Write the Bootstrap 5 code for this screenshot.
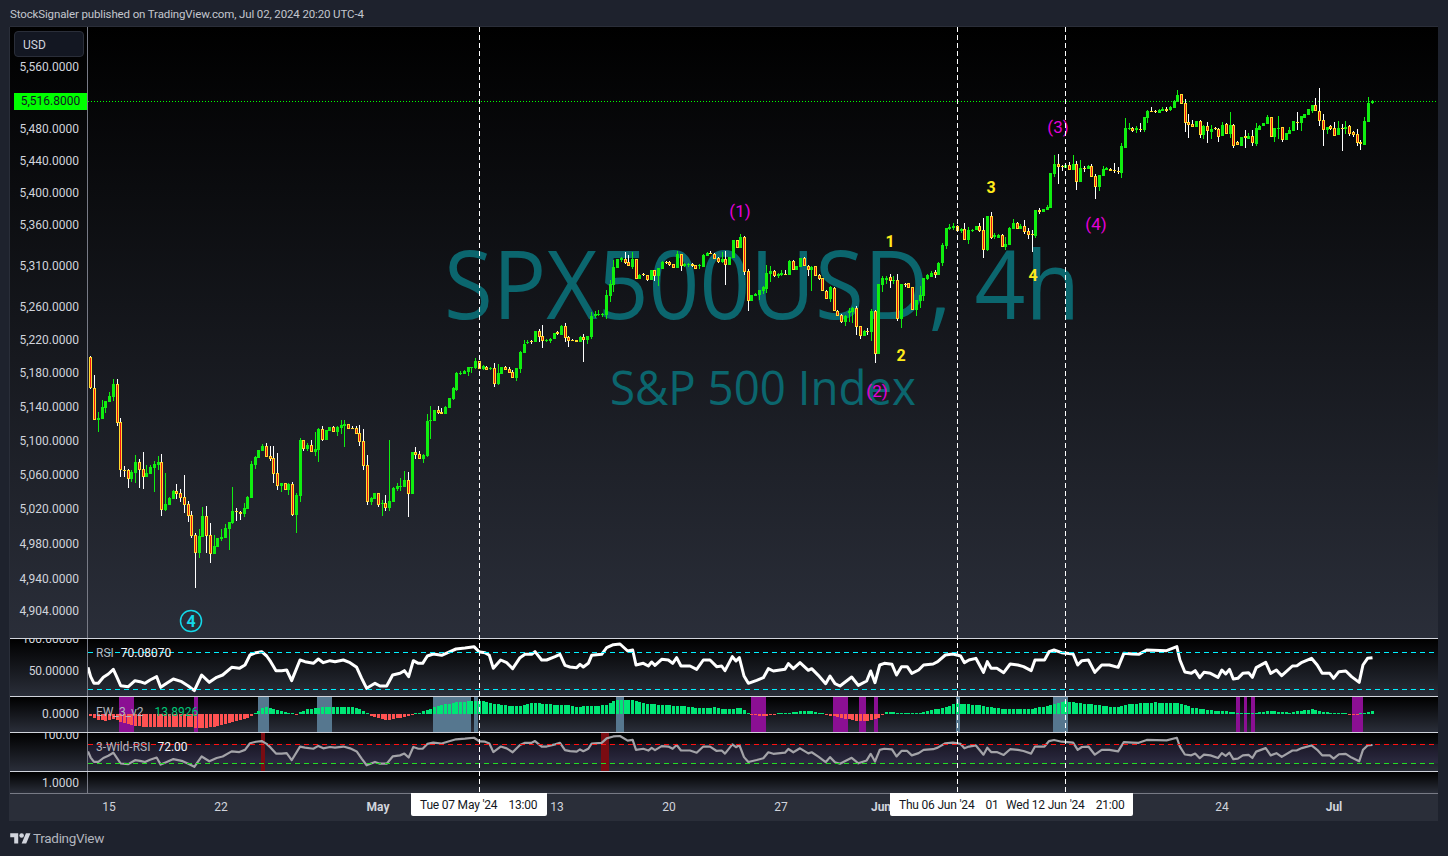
<!DOCTYPE html>
<html lang="en">
<head>
    <meta charset="UTF-8">
    <meta name="viewport" content="width=device-width, initial-scale=1.0">
    <title>SPX500USD, 4h</title>
    <link rel="stylesheet" href="https://cdn.jsdelivr.net/npm/bootstrap@5.3.0/dist/css/bootstrap.min.css">
    <style>
        body {
            background-color: #1e222d;
            color: #b2b5be;
            font-family: Roboto, "Liberation Sans", sans-serif;
            overflow: hidden;
        }
        .title-bar {
            height: 27px;
            padding-left: 10px;
            font-size: 11.5px;
            letter-spacing: -0.13px;
            line-height: 28px;
            color: #c3c6ce;
        }
        .chart {
            width: 1428px;
            margin-left: 10px;
            box-shadow: 0 -1px 0 #2a2e39, -1px 0 0 #2a2e39;
        }
        .pane {
            background: linear-gradient(#000, #2a2e39);
            border-bottom: 1px solid #d1d4dc;
        }
        .pane-main { height: 612px; }
        .pane-rsi { height: 58px; }
        .pane-ew { height: 36px; }
        .pane-wild { height: 39px; }
        .pane-blank { height: 22px; border-bottom-color: #787b86; }
        .axis {
            width: 78px;
            flex: none;
            overflow: hidden;
            border-right: 1px solid #787b86;
        }
        .axis-label {
            right: 8px;
            font-size: 12px;
            line-height: 16px;
            color: #d1d4dc;
        }
        .plot {
            overflow: hidden;
            min-width: 0;
        }
        .plot svg, .crosshairs {
            display: block;
            width: 100%;
            height: 100%;
        }
        .currency-btn {
            top: 4px;
            left: 4px;
            width: 70px;
            height: 26px;
            padding: 0 0 0 8px;
            font-size: 12px;
            line-height: 26px;
            text-align: left;
            color: #d1d4dc;
            background-color: #131722;
            border: 1px solid #2a2e39;
            border-radius: 4px;
        }
        .price-tag {
            top: 66px;
            left: 4px;
            width: 73px;
            height: 17px;
            font-size: 12px;
            line-height: 17px;
            text-align: center;
            color: #131722;
            background-color: #00ff00;
        }
        .legend {
            left: 8px;
            font-size: 12px;
            line-height: 14px;
            color: #b2b5be;
            white-space: nowrap;
        }
        .legend-value { color: #f0f3fa; }
        .legend-green { color: #00c777; }
        .time-axis {
            height: 27px;
            background-color: #2a2e39;
            overflow: visible;
        }
        .time-label {
            top: 5px;
            font-size: 12px;
            line-height: 16px;
            color: #d1d4dc;
            transform: translateX(-50%);
        }
        .time-tip {
            top: -1px;
            width: 136px;
            height: 23px;
            padding-left: 9px;
            font-size: 12px;
            letter-spacing: -0.2px;
            line-height: 24px;
            color: #131722;
            background-color: #fff;
            border-radius: 0 0 2px 2px;
            white-space: nowrap;
            overflow: hidden;
        }
        .time-tip span { margin-left: 11px; }
        .watermark {
            fill: #0b666e;
            font-family: "Open Sans", sans-serif;
            text-anchor: middle;
        }
        .wave-primary {
            fill: #e600dc;
            font-size: 17px;
            text-anchor: middle;
        }
        .wave-minor {
            fill: #ffeb1a;
            font-size: 16px;
            font-weight: 700;
            text-anchor: middle;
        }
        .crosshairs {
            top: 0;
            left: 0;
            pointer-events: none;
        }
        .footer-bar {
            padding-left: 10px;
            height: 35px;
            font-size: 13.5px;
            letter-spacing: -0.3px;
            color: #b2b5be;
        }
        .footer-bar span { margin-left: 2px; }
    </style>
</head>
<body>

    <div class="title-bar">StockSignaler published on TradingView.com, Jul 02, 2024 20:20 UTC-4</div>

    <div class="chart position-relative">
        <div class="pane pane-main d-flex">
            <div class="axis position-relative" id="axisMain">
                <button class="btn currency-btn position-absolute">USD</button>
                <div class="price-tag position-absolute">5,516.8000</div>
            </div>
            <div class="plot flex-grow-1"><svg id="plotMain" viewBox="88 27 1350 611" shape-rendering="crispEdges"></svg></div>
        </div>
        <div class="pane pane-rsi d-flex">
            <div class="axis position-relative" id="axisRsi"></div>
            <div class="plot flex-grow-1 position-relative">
                <svg id="plotRsi" viewBox="88 639 1350 57"></svg>
                <div class="legend position-absolute" style="top: 7px">RSI <span class="legend-value ms-1">70.08070</span></div>
            </div>
        </div>
        <div class="pane pane-ew d-flex">
            <div class="axis position-relative" id="axisEw"></div>
            <div class="plot flex-grow-1 position-relative">
                <svg id="plotEw" viewBox="88 697 1350 35" shape-rendering="crispEdges"></svg>
                <div class="legend position-absolute" style="top: 8px">EW_3_v2 <span class="legend-green ms-2">13.8926</span></div>
            </div>
        </div>
        <div class="pane pane-wild d-flex">
            <div class="axis position-relative" id="axisWild"></div>
            <div class="plot flex-grow-1 position-relative">
                <svg id="plotWild" viewBox="88 733 1350 38"></svg>
                <div class="legend position-absolute" style="top: 7px">3-Wild-RSI <span class="legend-value ms-1">72.00</span></div>
            </div>
        </div>
        <div class="pane pane-blank d-flex">
            <div class="axis position-relative" id="axisBlank"></div>
            <div class="plot flex-grow-1"></div>
        </div>
        <div class="time-axis position-relative" id="timeAxis"></div>
        <svg class="crosshairs position-absolute" id="crosshairs" viewBox="10 27 1428 794"></svg>
    </div>

    <div class="footer-bar d-flex align-items-center">
        <svg width="21" height="16" viewBox="0 0 36 28" fill="#d1d4dc"><path d="M14 22H7V11H0V4h14v18zM28 22h-8l7.5-18h8L28 22z"/><circle cx="20" cy="8" r="4"/></svg>
        <span>TradingView</span>
    </div>

    <script>
        // [high, body top, body bottom, low, 1 = up bar], read off the picture at 3x
        // each segment has its own y offset
        const barsA = [[47,52,145,147,0],[105,145,240,240,0],[217,234,240,276,1],[180,202,237,237,1],[183,183,205,218,1],[156,168,186,186,1],[117,132,171,183,1],[117,132,249,258,0],[235,246,391,411,0],[379,390,393,411,0],[388,391,417,444,0],[391,397,417,426,1],[345,366,399,430,1],[358,366,390,444,0],[336,387,411,447,0],[375,399,411,411,1],[376,381,402,402,1],[364,372,384,456,1],[348,366,375,390,1],[342,366,510,528,0],[399,492,510,513,1],[471,474,495,495,1],[450,453,477,477,1],[432,453,462,477,0],[447,459,474,486,0],[405,471,495,519,0],[483,492,528,546,0],[513,525,588,594,0],[579,585,639,744,0],[567,588,639,654,1],[501,528,591,591,1],[498,528,588,639,0],[549,585,642,669,0],[585,618,642,642,1],[594,594,621,621,1],[567,591,597,603,1],[552,564,594,594,1],[546,546,567,630,1],[441,513,549,552,1],[504,513,515,543,0],[513,516,521,540,0],[489,504,522,531,1],[468,471,507,507,1],[363,372,474,474,1],[348,351,375,387,1],[330,330,354,354,1],[312,318,333,333,1],[309,318,351,351,0],[318,348,357,363,0],[318,354,402,429,0],[339,399,438,450,0],[429,429,438,456,1],[429,430,450,450,0],[429,432,450,465,1],[426,432,525,528,0],[459,465,525,579,1],[294,300,468,486,1],[300,300,327,333,0],[309,315,327,333,1],[300,315,336,336,0],[276,327,336,348,1],[264,267,330,366,1],[258,267,300,303,0],[270,270,300,300,1],[261,261,273,273,1],[258,261,276,276,0],[258,261,276,288,1],[240,255,264,282,1],[240,252,258,321,1],[252,252,267,267,0],[258,264,266,267,0],[258,264,282,282,0],[255,279,306,318,0],[267,303,378,390,0],[345,375,486,495,0],[472,474,486,495,1],[459,459,477,477,1],[459,459,495,501,0],[480,489,492,528,1],[465,489,504,513,0],[300,483,504,513,1],[441,444,486,486,1],[429,438,447,453,1],[414,438,441,453,1],[393,420,441,441,1],[396,420,462,531,0],[336,336,462,462,1],[321,336,345,357,0],[333,342,357,357,0],[342,345,357,369,1],[222,243,348,351,1],[198,240,243,297,1],[210,210,243,243,1],[198,210,219,222,0],[204,216,222,222,0],[198,201,222,222,1],[174,174,204,204,1],[141,144,177,180,1],[96,99,150,153,1],[93,99,102,105,1],[90,93,102,102,1],[81,81,96,108,1],[81,81,84,99,1],[54,63,84,87,1],[63,63,87,87,0]];
        const barsB = [[525,528,537,540,1],[527,530,539,540,0],[530,534,537,540,1],[520,534,582,591,0],[522,549,582,585,1],[531,531,552,552,1],[528,532,540,540,0],[531,537,549,549,0],[540,545,564,564,0],[534,534,564,573,1],[483,486,537,549,1],[450,462,489,489,1],[450,456,459,462,1],[450,453,456,462,0],[423,423,456,456,1],[417,423,441,456,0],[405,438,453,474,0],[447,450,453,456,1],[444,447,453,459,1],[429,429,447,447,1],[423,426,432,435,0],[405,408,435,435,1],[399,408,444,456,0],[438,441,453,471,0],[447,450,453,453,0],[450,450,456,456,0],[439,441,456,456,1],[432,441,450,516,0],[438,438,450,462,1],[366,378,441,447,1],[363,372,378,384,1],[360,372,375,378,1],[369,372,375,382,1],[300,315,375,387,1],[270,282,318,336,1],[210,231,285,306,1],[207,207,234,234,1],[201,205,210,216,1],[186,207,219,222,0],[195,216,228,228,0],[186,207,231,237,1],[207,207,267,267,0],[252,255,267,267,1],[249,252,255,258,0],[255,255,270,273,0],[240,240,270,270,1],[240,240,258,273,0],[234,234,258,288,1],[213,216,237,237,1],[213,216,218,222,0],[213,216,225,228,0],[222,222,234,234,0],[183,192,234,234,1],[192,192,228,243,0],[219,222,228,231,1],[219,222,225,231,1],[219,222,228,231,0],[225,225,237,237,0],[222,225,228,237,1],[192,195,231,231,1],[186,189,198,198,1],[183,188,190,192,0],[189,192,207,207,0],[201,204,216,219,0],[186,207,216,219,1],[183,207,225,285,0],[201,201,225,225,1],[150,150,204,204,1],[150,150,174,174,0],[132,141,174,174,1],[138,141,246,255,0],[237,243,333,363,0],[315,315,333,333,1],[309,312,318,318,1],[300,300,315,330,1],[288,291,303,312,1],[225,249,297,309,1],[228,243,252,276,1],[240,243,258,261,0],[249,252,258,264,1],[240,249,255,258,1],[240,252,252,255,0],[210,213,255,255,1],[210,213,240,240,0],[228,228,240,240,1],[204,204,231,231,1],[201,204,228,228,0],[225,228,240,258,0],[228,231,240,303,1],[228,228,258,258,0],[252,255,267,270,0],[264,264,303,303,0],[300,303,327,327,0],[288,291,327,336,1],[291,294,363,363,0],[360,363,378,378,0],[372,375,396,399,0],[375,378,396,408,1],[354,363,369,396,1],[351,354,366,399,1],[348,354,411,435,0],[408,408,438,447,0],[420,423,438,438,1],[414,423,426,435,0],[357,363,426,453,1],[360,363,492,519,0],[282,282,492,492,1],[258,264,285,306,1],[258,264,270,282,1],[252,261,273,294,0],[258,270,273,282,1],[252,270,387,393,0],[282,282,387,414,1],[279,282,285,291,0],[279,279,294,294,0],[291,291,360,360,0],[330,330,360,378,1],[288,315,333,354,1],[264,264,318,333,1],[252,255,267,270,1],[243,249,261,261,1],[240,246,255,264,0],[216,219,255,255,1],[159,165,219,228,1],[114,114,168,177,1]];
        const barsC = [[432,441,447,450,1],[430,438,444,450,1],[435,438,453,453,0],[444,447,453,459,1],[429,447,480,480,0],[441,450,480,492,1],[447,450,453,456,1],[438,438,450,450,1],[429,438,453,456,0],[414,450,510,534,0],[408,408,510,513,1],[396,408,474,477,0],[459,465,471,477,1],[462,465,474,474,1],[462,465,501,501,0],[471,492,501,510,1],[441,444,495,495,1],[417,429,447,447,1],[426,429,447,447,0],[432,438,447,447,1],[420,438,456,462,0],[444,453,465,477,0],[450,462,465,516,0],[390,390,468,474,1],[384,390,396,402,0],[387,387,396,396,1],[375,381,390,390,1],[279,279,384,384,1],[225,252,282,291,1],[222,252,261,312,0],[255,258,261,273,0],[252,255,264,264,1],[246,255,270,270,0],[225,252,270,270,1],[243,252,306,330,0],[240,264,306,306,1],[258,264,267,276,0],[255,258,267,267,1],[252,258,291,291,0],[282,288,321,357,0],[285,285,321,333,1],[258,267,288,288,1],[261,264,270,270,1],[264,267,273,273,0],[249,270,272,279,0],[261,272,274,282,0],[189,198,279,294,1],[114,144,204,204,1],[129,144,147,150,1],[141,144,153,156,0],[138,144,150,159,1],[129,147,150,156,0],[111,111,150,156,1],[90,93,114,129,1],[81,93,96,96,0],[90,93,97,99,0],[87,90,99,99,1],[81,87,93,93,1],[81,87,93,96,0],[78,81,90,93,1],[60,63,84,84,1],[30,45,66,66,1],[42,42,72,72,0],[57,69,129,156,0],[102,126,135,174,0],[120,132,141,141,0],[123,123,141,141,1],[120,123,165,174,0],[135,138,165,177,1],[126,138,153,189,0],[135,147,156,177,1],[141,144,147,150,0],[144,147,171,186,0],[126,135,168,168,1],[129,132,162,162,0],[96,135,162,174,1],[132,135,198,204,0],[183,186,195,195,0],[171,171,198,198,1],[150,168,174,204,0],[159,168,177,177,1],[150,168,189,198,0],[129,144,192,198,1],[135,138,150,150,1],[129,129,138,138,1],[105,111,132,132,1],[111,111,171,171,0],[144,144,171,186,1],[108,144,147,177,1],[141,141,180,186,0],[159,159,180,180,1],[141,150,162,162,1],[123,123,153,153,1],[96,126,129,150,0],[108,108,129,153,1],[102,102,114,114,1],[87,87,105,105,1],[75,75,93,99,1],[54,75,93,93,0],[24,93,123,138,0],[102,120,150,198,0],[141,141,150,162,1],[135,138,147,150,0],[126,144,168,168,0],[123,144,165,165,1],[132,144,146,213,0],[123,141,147,162,1],[135,138,162,168,0],[153,156,165,171,0],[147,162,189,198,0],[180,186,192,210,0],[111,123,195,195,1],[51,69,126,126,1],[60,63,69,72,1]];

        const rsiA = [[264,112],[272,140],[282,160],[295,160],[310,142],[325,132],[340,118],[350,140],[362,167],[385,170],[405,152],[420,155],[435,160],[450,150],[470,140],[482,172],[500,160],[520,147],[545,155],[565,168],[583,182],[605,135],[628,157],[650,142],[668,135],[695,112],[718,115],[735,105],[750,75],[768,68],[785,65],[800,78],[812,95],[828,122],[845,122],[860,120],[875,152],[900,90],[915,95],[940,100],[955,87],[970,98],[990,92],[1005,95],[1030,90],[1050,98],[1070,112],[1085,145],[1100,175],[1125,160],[1140,168],[1160,168],[1178,135],[1200,130],[1213,122],[1226,140],[1240,92],[1255,100],[1268,100],[1282,78],[1300,72],[1325,76],[1345,67],[1368,57],[1395,54],[1422,50],[1438,66]];
        const rsiB = [[0,48],[15,50],[28,58],[40,97],[62,72],[80,80],[98,98],[120,65],[135,55],[155,55],[165,47],[185,72],[200,72],[225,62],[240,55],[255,88],[270,93],[290,95],[300,85],[310,93],[325,82],[335,58],[365,55],[380,35],[400,26],[420,24],[443,45],[458,42],[468,87],[490,82],[505,90],[515,78],[525,88],[545,70],[565,72],[578,82],[590,65],[603,90],[630,90],[650,100],[670,72],[690,72],[710,92],[725,90],[735,104],[757,62],[768,75],[778,65],[792,120],[805,142],[830,133],[850,125],[865,98],[880,105],[915,100],[925,83],[940,98],[960,80],[985,103],[995,98],[1015,118],[1037,143],[1050,120],[1065,143],[1080,150],[1115,123],[1135,148],[1160,135],[1172,105],[1185,140]];
        const rsiC = [[78,105],[90,100],[110,103],[122,135],[135,110],[150,110],[162,130],[180,120],[193,105],[218,102],[230,95],[250,75],[270,72],[290,78],[300,98],[312,90],[330,85],[350,127],[360,95],[370,115],[385,115],[403,128],[420,102],[440,105],[455,110],[475,122],[485,90],[510,90],[522,65],[535,60],[555,68],[585,72],[597,105],[608,92],[625,90],[642,127],[660,105],[680,105],[703,112],[718,70],[740,72],[757,73],[778,60],[830,62],[857,50],[865,90],[878,126],[895,130],[905,122],[917,143],[928,127],[945,130],[965,142],[975,120],[985,132],[995,118],[1005,147],[1017,145],[1030,130],[1045,128],[1055,142],[1065,113],[1090,97],[1103,130],[1118,120],[1132,137],[1160,108],[1172,107],[1185,97],[1210,85],[1225,105],[1238,130],[1258,130],[1268,145],[1282,125],[1300,123],[1315,140],[1335,157],[1345,105],[1357,85],[1370,83]];

        const ewA = [[264,-3],[290,-18],[320,-20],[345,-15],[360,-25],[400,-35],[440,-40],[480,-40],[520,-38],[560,-38],[590,-42],[640,-40],[680,-30],[720,-18],[755,-6],[765,3],[785,18],[800,20],[830,12],[860,4],[885,-4],[900,6],[920,14],[960,20],[1060,22],[1090,8],[1105,-3],[1130,-12],[1160,-18],[1200,-12],[1230,-4],[1250,2],[1280,12],[1310,24],[1360,34],[1410,38]];
        const ewB = [[0,40],[30,32],[60,28],[100,24],[130,26],[160,34],[220,28],[260,27],[290,22],[340,24],[380,28],[400,40],[430,42],[460,42],[480,34],[530,28],[570,26],[620,22],[660,18],[700,20],[740,14],[780,18],[805,3],[815,-3],[850,-6],[880,-2],[910,2],[960,9],[1000,8],[1020,2],[1030,-3],[1060,-6],[1100,-15],[1130,-20],[1160,-22],[1195,-12]];
        const ewC = [[85,-3],[95,6],[125,4],[160,-2],[190,6],[240,18],[280,32],[340,26],[400,15],[470,14],[520,25],[560,38],[640,28],[700,20],[730,30],[800,35],[860,32],[900,18],[960,10],[1005,6],[1020,-1],[1060,3],[1100,10],[1150,4],[1210,14],[1260,3],[1270,-1],[1330,-2],[1350,3],[1370,10]];

        const purpleBands = [[119,134],[194,198],[751,766],[833,848],[859,866],[874,878],[1236,1240],[1244,1247],[1251,1255],[1352,1363]];
        const blueBands = [[258,269],[317,332],[433,471],[474,478],[616,624],[956,960],[1053,1068]];
        const redBands = [[261,265],[601,609]];

        const SVG_NS = "http://www.w3.org/2000/svg";

        function add(svg, name, attrs, text) {
            let el = document.createElementNS(SVG_NS, name);
            for (let key in attrs) el.setAttribute(key, attrs[key]);
            if (text) el.textContent = text;
            svg.appendChild(el);
            return el;
        }

        function barX(i) {
            return Math.floor(90.9 + i * 3.735);
        }

        function drawBars(svg, bars, yOffset, startIndex) {
            bars.forEach((b, n) => {
                let x = barX(startIndex + n);
                let [h, t, bot, l] = b.slice(0, 4).map(v => Math.round(yOffset + v / 3));
                let up = b[4] === 1;
                add(svg, "rect", { x: x, y: h, width: 1, height: Math.max(l - h, 1), fill: up ? "#10ee10" : "#fff" });
                add(svg, "rect", { x: x - 1, y: t, width: 3, height: Math.max(bot - t, 1), fill: up ? "#10ee10" : "#ffdb2e" });
                if (!up && bot - t >= 3) {
                    add(svg, "rect", { x: x, y: t + 1, width: 1, height: bot - t - 2, fill: "#f01212" });
                }
            });
        }

        function axisLabels(id, labels) {
            let axis = document.getElementById(id);
            let top = axis.getBoundingClientRect().top;
            labels.forEach(([text, y]) => {
                let span = document.createElement("span");
                span.className = "axis-label position-absolute";
                span.style.top = (y - top - 8) + "px";
                span.textContent = text;
                axis.appendChild(span);
            });
        }

        function rsiPoints() {
            return [
                ...rsiA.map(p => [p[0] / 3, 630 + p[1] / 3]),
                ...rsiB.map(p => [480 + p[0] / 3, 636 + p[1] / 3]),
                ...rsiC.map(p => [850 + p[0] / 2.622, 630 + p[1] / 3])
            ];
        }

        function ewValue(points, x) {
            if (x <= points[0][0]) return points[0][1];
            for (let i = 1; i < points.length; i++) {
                if (x <= points[i][0]) {
                    let a = points[i - 1], b = points[i];
                    return a[1] + (b[1] - a[1]) * (x - a[0]) / (b[0] - a[0]);
                }
            }
            return points[points.length - 1][1];
        }

        // main pane
        const plotMain = document.getElementById("plotMain");
        add(plotMain, "text", { class: "watermark", x: 762, y: 319, "font-size": 96, textLength: 636, lengthAdjust: "spacingAndGlyphs", "shape-rendering": "auto" }, "SPX500USD, 4h");
        add(plotMain, "text", { class: "watermark", x: 763, y: 405, "font-size": 48, textLength: 306, lengthAdjust: "spacingAndGlyphs", "shape-rendering": "auto" }, "S&P 500 Index");
        add(plotMain, "line", { x1: 88, x2: 1438, y1: 101.5, y2: 101.5, stroke: "#00ff00", "stroke-dasharray": "1 2" });
        drawBars(plotMain, barsA, 340, 0);
        drawBars(plotMain, barsB, 190, barsA.length);
        drawBars(plotMain, barsC, 80, barsA.length + barsB.length);

        [["(1)", 740, 217], ["(2)", 877, 397], ["(3)", 1058, 133], ["(4)", 1096, 230]].forEach(w => {
            add(plotMain, "text", { class: "wave-primary", x: w[1], y: w[2] }, w[0]);
        });
        [["1", 890, 247], ["2", 901, 361], ["3", 991, 193], ["4", 1033, 281]].forEach(w => {
            add(plotMain, "text", { class: "wave-minor", x: w[1], y: w[2] }, w[0]);
        });
        add(plotMain, "circle", { cx: 191, cy: 621, r: 10.5, fill: "none", stroke: "#14d8e8", "stroke-width": 1.5, "shape-rendering": "auto" });
        add(plotMain, "text", { x: 191, y: 627, "font-size": 16, "font-weight": 700, fill: "#14d8e8", "text-anchor": "middle" }, "4");

        // RSI pane
        const plotRsi = document.getElementById("plotRsi");
        const rsi = rsiPoints();
        add(plotRsi, "polyline", { points: rsi.map(p => p.join(",")).join(" "), fill: "none", stroke: "#fff", "stroke-width": 3, "stroke-linejoin": "round" });
        [652.5, 689.5].forEach(y => {
            add(plotRsi, "line", { x1: 88, x2: 1438, y1: y, y2: y, stroke: "#00f0ff", "stroke-dasharray": "5 4" });
        });

        // EW histogram pane
        const plotEw = document.getElementById("plotEw");
        purpleBands.forEach(b => add(plotEw, "rect", { x: b[0], y: 697, width: b[1] - b[0], height: 35, fill: "#8b0f93" }));
        blueBands.forEach(b => add(plotEw, "rect", { x: b[0], y: 697, width: b[1] - b[0], height: 35, fill: "#56778f" }));
        const ewPoints = [
            ...ewA.map(p => [p[0] / 3, p[1] / 3]),
            ...ewB.map(p => [480 + p[0] / 3, p[1] / 3]),
            ...ewC.map(p => [850 + p[0] / 2.622, p[1] / 3])
        ];
        for (let i = 0; i < 344; i++) {
            let x = barX(i);
            let v = Math.round(ewValue(ewPoints, x));
            if (v === 0) v = 1;
            add(plotEw, "rect", { x: x - 1, y: v > 0 ? 714 - v : 714, width: 3, height: Math.abs(v), fill: v > 0 ? "#00e676" : "#ff5252" });
        }

        // 3-Wild-RSI pane
        const plotWild = document.getElementById("plotWild");
        add(plotWild, "rect", { x: 88, y: 744, width: 1350, height: 19.5, fill: "#7e57c2", "fill-opacity": 0.12 });
        redBands.forEach(b => add(plotWild, "rect", { x: b[0], y: 733, width: b[1] - b[0], height: 38, fill: "#7a0c12" }));
        add(plotWild, "polyline", { points: rsi.map(p => p[0] + "," + (736 + (p[1] - 644) * 0.66)).join(" "), fill: "none", stroke: "#a3a3a8", "stroke-width": 2.2, "stroke-linejoin": "round" });
        add(plotWild, "line", { x1: 88, x2: 1438, y1: 744.5, y2: 744.5, stroke: "#ff1010", "stroke-dasharray": "5 4" });
        add(plotWild, "line", { x1: 88, x2: 1438, y1: 763.5, y2: 763.5, stroke: "#22dd22", "stroke-dasharray": "5 4" });

        // crosshairs on top of every pane
        const crosshairs = document.getElementById("crosshairs");
        [479.5, 957.5, 1065.5].forEach(x => {
            add(crosshairs, "line", { x1: x, x2: x, y1: 27, y2: 794, stroke: "#fff", "stroke-dasharray": "5 3", "shape-rendering": "crispEdges" });
        });

        // price and indicator scales
        axisLabels("axisMain", [["5,560.0000", 67], ["5,480.0000", 129], ["5,440.0000", 161], ["5,400.0000", 193], ["5,360.0000", 225], ["5,310.0000", 266], ["5,260.0000", 307], ["5,220.0000", 340], ["5,180.0000", 373], ["5,140.0000", 407], ["5,100.0000", 441], ["5,060.0000", 475], ["5,020.0000", 509], ["4,980.0000", 544], ["4,940.0000", 579], ["4,904.0000", 611]]);
        axisLabels("axisRsi", [["100.00000", 639], ["50.00000", 671]]);
        axisLabels("axisEw", [["0.0000", 714]]);
        axisLabels("axisWild", [["100.00", 735]]);
        axisLabels("axisBlank", [["1.0000", 783]]);

        // time scale
        const timeAxis = document.getElementById("timeAxis");
        [["15", 109], ["22", 221], ["May", 378, true], ["13", 557], ["20", 669], ["27", 781], ["Jun", 881, true], ["24", 1222], ["Jul", 1334, true]].forEach(t => {
            let span = document.createElement("span");
            span.className = "time-label position-absolute" + (t[2] ? " fw-bold" : "");
            span.style.left = (t[1] - 10) + "px";
            span.textContent = t[0];
            timeAxis.appendChild(span);
        });
        [["Tue 07 May '24", "13:00", 411], ["Thu 06 Jun '24", "01:00", 890], ["Wed 12 Jun '24", "21:00", 997]].forEach(t => {
            let tip = document.createElement("div");
            tip.className = "time-tip position-absolute";
            tip.style.left = (t[2] - 10) + "px";
            tip.innerHTML = t[0] + "<span>" + t[1] + "</span>";
            timeAxis.appendChild(tip);
        });
    </script>
    <script src="https://cdn.jsdelivr.net/npm/bootstrap@5.3.0/dist/js/bootstrap.bundle.min.js"></script>

</body>
</html>
